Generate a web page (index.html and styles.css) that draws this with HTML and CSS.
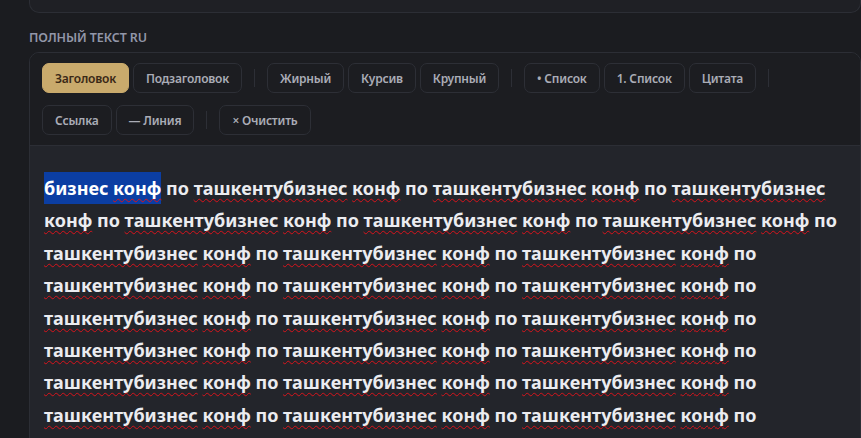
FILE: index.html
```html
<!DOCTYPE html>
<html lang="ru">
<head>
    <meta charset="UTF-8">
    <meta name="viewport" content="width=device-width, initial-scale=1.0">
    <title>Полный текст</title>
    <link rel="stylesheet" href="styles.css">
</head>
<body>

<div class="card-top"></div>

<div class="field">
    <div class="field-label">Полный текст RU</div>

    <div class="editor">
        <div class="toolbar">
            <button class="tool active">Заголовок</button>
            <button class="tool">Подзаголовок</button>
            <span class="sep"></span>
            <button class="tool">Жирный</button>
            <button class="tool">Курсив</button>
            <button class="tool">Крупный</button>
            <span class="sep"></span>
            <button class="tool">• Список</button>
            <button class="tool">1. Список</button>
            <button class="tool">Цитата</button>
            <span class="sep"></span>
            <button class="tool">Ссылка</button>
            <button class="tool">— Линия</button>
            <span class="sep"></span>
            <button class="tool">× Очистить</button>
        </div>

        <div class="content" id="content" contenteditable="true" spellcheck="false"><span class="picked">бизнес <span class="typo">конф</span></span> по </div>
    </div>
</div>

<script>
    // fill the editor with the repeated text
    var box = document.getElementById('content');
    var html = '';
    for (var i = 0; i < 30; i++) {
        html += '<span class="typo">ташкентубизнес</span> <span class="typo">конф</span> по ';
    }
    box.innerHTML += html;
</script>

</body>
</html>
```

FILE: styles.css
```css
body {
    margin: 0;
    padding: 0 0 0 29px;
    background-color: #1b1c20;
    font-family: "Noto Sans", "Open Sans", Arial, sans-serif;
    height: 438px;
    overflow: hidden;
}
.card-top {
    height: 12px;
    background: #1f2025;
    border: 1px solid #2c2e35;
    border-top: none;
    border-radius: 0 0 10px 10px;
}
.field {
    margin-top: 16px;
}
.field-label {
    font-size: 12.5px;
    font-weight: 600;
    letter-spacing: -0.1px;
    text-transform: uppercase;
    color: #9296a8;
    line-height: 18px;
    margin-bottom: 5px;
}
.editor {
    border: 1px solid #2c2e35;
    border-radius: 10px;
    overflow: hidden;
}
.toolbar {
    display: flex;
    flex-wrap: wrap;
    align-items: center;
    gap: 12px 4px;
    padding: 10px 12px;
    border-bottom: 1px solid #2c2e35;
    background: #1c1d21;
}
.tool {
    height: 30px;
    padding: 0 12px;
    font-family: inherit;
    font-size: 12px;
    font-weight: 600;
    letter-spacing: -0.2px;
    color: #aaacb6;
    background: #1c1d21;
    border: 1px solid #2d2f36;
    border-radius: 7px;
    cursor: pointer;
}
.tool:hover {
    background: #24262c;
}
.tool.active {
    background: #c9aa6c;
    border-color: #c9aa6c;
    color: #3a2816;
}
.sep {
    width: 1px;
    height: 18px;
    margin: 0 8px;
    background: #2d2f36;
}
.content {
    background: #23252b;
    padding: 26px 14px 20px;
    font-size: 18px;
    font-weight: 700;
    line-height: 1.8;
    color: #ebecf0;
    outline: none;
}
.typo {
    text-decoration: underline wavy #d8141c;
    text-decoration-skip-ink: none;
    text-underline-offset: 3px;
    text-decoration-thickness: 1.3px;
}
.picked {
    background: #0b3ea3;
    color: #ffffff;
    padding: 4px 0;
}
```
